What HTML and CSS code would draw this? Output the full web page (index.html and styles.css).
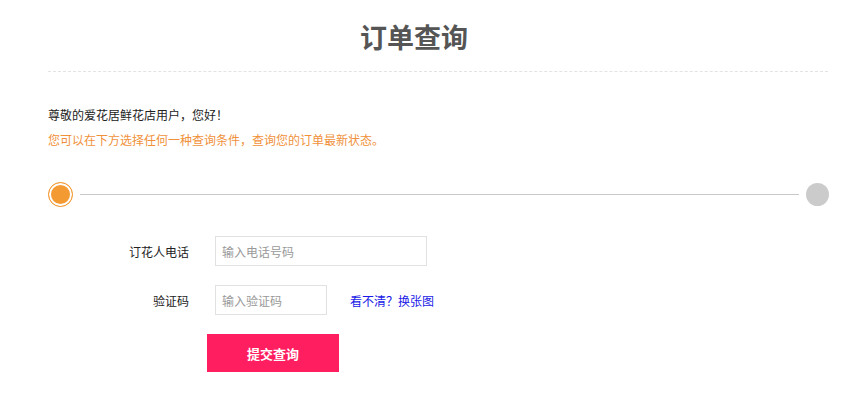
FILE: index.html
```html
<!DOCTYPE html>
<html lang="zh-CN">
<head>
    <meta charset="UTF-8">
    <title>订单查询</title>
    <link rel="stylesheet" href="styles.css">
</head>
<body>
    <div class="page">
        <h1 class="title">订单查询</h1>

        <div class="intro">
            <p class="greet">尊敬的爱花居鲜花店用户，您好！</p>
            <p class="tip">您可以在下方选择任何一种查询条件，查询您的订单最新状态。</p>
        </div>

        <div class="steps">
            <span class="dot active"></span>
            <span class="track"></span>
            <span class="dot"></span>
        </div>

        <form class="query">
            <div class="row">
                <label class="label">订花人电话</label>
                <input class="field wide" type="text" placeholder="输入电话号码">
            </div>
            <div class="row">
                <label class="label">验证码</label>
                <input class="field short" type="text" placeholder="输入验证码">
                <a class="refresh" href="#">看不清？换张图</a>
            </div>
            <div class="row">
                <button class="submit" type="button">提交查询</button>
            </div>
        </form>
    </div>
</body>
</html>
```

FILE: styles.css
```css
* {
    box-sizing: border-box;
    margin: 0;
    padding: 0;
}

body {
    font-family: "Noto Sans CJK SC", "Noto Sans", sans-serif;
    font-size: 12px;
    color: #333;
    background: #fff;
}

.page {
    width: 780px;
    margin-left: 48px;
}

.title {
    text-align: center;
    font-size: 27px;
    font-weight: bold;
    color: #555;
    height: 72px;
    line-height: 74px;
    padding-right: 48px;
    border-bottom: 1px dashed #e3e3e3;
}

.intro {
    padding-top: 33px;
}

.greet {
    line-height: 20px;
    color: #222;
}

.tip {
    margin-top: 5px;
    line-height: 20px;
    color: #f0913a;
}

.steps {
    display: flex;
    align-items: center;
    margin-top: 32px;
    width: 781px;
}

.dot {
    width: 23px;
    height: 23px;
    border-radius: 50%;
    background: #cbcbcb;
    flex: none;
}

.dot.active {
    width: 25px;
    height: 25px;
    background: #f39a33;
    border: 1px solid #f39a33;
    box-shadow: inset 0 0 0 2px #fff;
}

.track {
    flex: 1;
    height: 1px;
    background: #c8c8c8;
    margin: 0 7px;
}

.query {
    margin-top: 29px;
}

.row {
    display: flex;
    align-items: center;
    margin-bottom: 19px;
}

.label {
    width: 141px;
    text-align: right;
    color: #222;
    margin-right: 26px;
}

.field {
    height: 30px;
    border: 1px solid #e1e1e1;
    padding: 0 6px;
    font-family: inherit;
    font-size: 12px;
    color: #333;
    outline: none;
}

.field::placeholder {
    color: #999;
}

.field.wide {
    width: 212px;
}

.field.short {
    width: 112px;
}

.refresh {
    margin-left: 23px;
    color: #1a1ae6;
    text-decoration: none;
}

.submit {
    margin-left: 159px;
    width: 132px;
    height: 38px;
    border: none;
    background: #ff1e60;
    color: #fff;
    font-family: inherit;
    font-size: 13px;
    font-weight: bold;
    cursor: pointer;
}
```
